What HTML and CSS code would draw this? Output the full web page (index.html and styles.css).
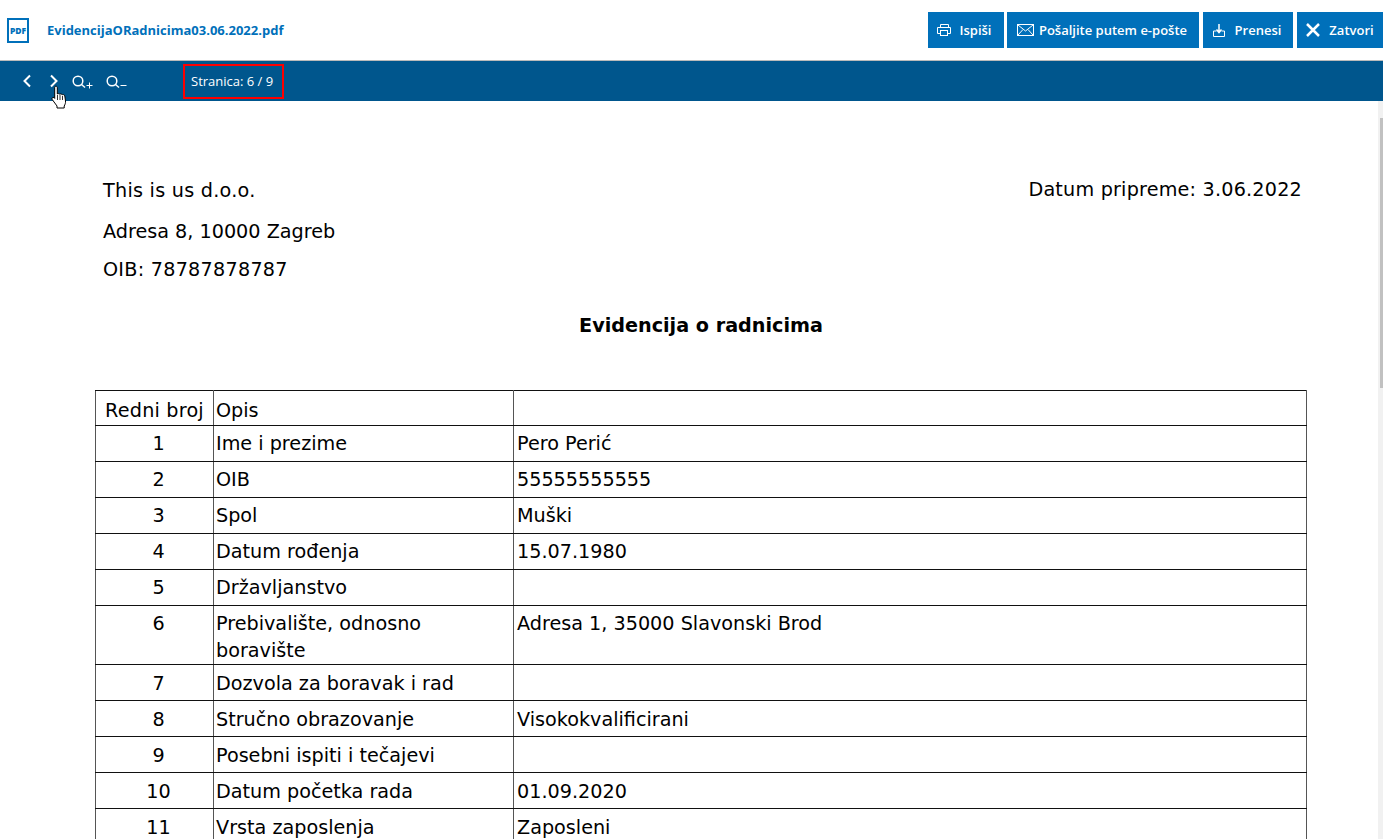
FILE: index.html
```html
<!DOCTYPE html>
<html lang="en">
<head>
    <meta charset="UTF-8">
    <title>EvidencijaORadnicima03.06.2022.pdf</title>
    <link rel="stylesheet" href="styles.css">
</head>
<body>
    <header class="topbar">
        <div class="file">
            <svg class="file-icon" width="22" height="25" viewBox="0 0 22 25">
                <rect x="1" y="1" width="20" height="23" fill="none" stroke="#0070ba" stroke-width="2"/>
                <text x="11" y="16" text-anchor="middle" class="file-icon-text">PDF</text>
            </svg>
            <span class="file-name">EvidencijaORadnicima03.06.2022.pdf</span>
        </div>
        <div class="actions">
            <button type="button" class="btn btn-print">
                <svg width="14" height="12" viewBox="0 0 14 12" fill="none" stroke="#fff"><path d="M3.5 3V.5h8V3M3.5 9.5H.5V3.5h13v6h-3"/><rect x="3.5" y="6.5" width="7" height="5"/></svg>
                Ispiši
            </button>
            <button type="button" class="btn btn-mail">
                <svg width="17" height="12" viewBox="0 0 17 12" fill="none" stroke="#fff"><rect x=".5" y=".5" width="16" height="11"/><path d="M1 1l7.500 6L16 1M1 11l5-5.500M16 11l-5-5.500"/></svg>
                Pošaljite putem e-pošte
            </button>
            <button type="button" class="btn btn-save">
                <svg width="12" height="13" viewBox="0 0 12 13" fill="none" stroke="#fff"><path d="M.5 7v5.500h11V7h-3M.5 7h3"/><path d="M6 0v8M3.500 5.500L6 8.500l2.500-3" stroke-width="1.500"/></svg>
                Prenesi
            </button>
            <button type="button" class="btn btn-close">
                <svg width="14" height="14" viewBox="0 0 14 14" fill="none" stroke="#fff" stroke-width="2.500"><path d="M1 1l12 12M13 1L1 13"/></svg>
                Zatvori
            </button>
        </div>
    </header>

    <nav class="toolbar">
        <svg class="tool tool-prev" width="10" height="14" viewBox="0 0 10 14" fill="none" stroke="#fff" stroke-width="2"><path d="M8 1.500L2.500 7 8 12.500"/></svg>
        <svg class="tool tool-next" width="10" height="14" viewBox="0 0 10 14" fill="none" stroke="#fff" stroke-width="2"><path d="M2 1.500L7.500 7 2 12.500"/></svg>
        <svg class="tool tool-in" width="21" height="14" viewBox="0 0 21 14" fill="none" stroke="#fff" stroke-width="1.500"><circle cx="6" cy="6" r="4.800"/><path d="M9.500 9.500l3.500 3"/><path d="M14.500 10.500h6M17.500 7.500v6" stroke-width="1"/></svg>
        <svg class="tool tool-out" width="21" height="14" viewBox="0 0 21 14" fill="none" stroke="#fff" stroke-width="1.500"><circle cx="6" cy="6" r="4.800"/><path d="M9.500 9.500l3.500 3"/><path d="M14.500 10.500h6" stroke-width="1"/></svg>
        <div class="page-count">Stranica: 6 / 9</div>
    </nav>

    <svg class="cursor" width="17" height="24" viewBox="0 0 17 24">
        <path d="M4 1.500c1 -.8 2.300 0 2.300 1.200V9c.8-.6 2-.5 2.500.3.800-.6 2-.4 2.500.5 1-.6 2.300 0 2.500 1.200l.7 5c.2 2-.4 3.500-1.300 5v2H6v-2L1.200 14.500c-.8-1.300.6-2.700 1.800-1.800l.7.7V2.700c0-.5 0-.9.300-1.200z" fill="#fff" stroke="#000" stroke-width="1"/>
        <path d="M6.500 10v5M9 10v5M11.500 11v4" stroke="#000" stroke-width=".8" fill="none"/>
    </svg>

    <div class="viewer">
        <main class="document">
            <div class="doc-head">
                <div class="company">
                    <p class="company-name">This is us d.o.o.</p>
                    <p class="company-address">Adresa 8, 10000 Zagreb</p>
                    <p class="company-oib">OIB: 78787878787</p>
                </div>
                <div class="doc-date">Datum pripreme: 3.06.2022</div>
            </div>
            <h1 class="doc-title">Evidencija o radnicima</h1>
            <table class="records">
                <colgroup>
                    <col class="col-num">
                    <col class="col-label">
                    <col>
                </colgroup>
                <tr class="row-head"><td class="num">Redni broj</td><td class="label">Opis</td><td></td></tr>
                <tr><td class="num">1</td><td class="label">Ime i prezime</td><td>Pero Perić</td></tr>
                <tr><td class="num">2</td><td class="label">OIB</td><td>55555555555</td></tr>
                <tr><td class="num">3</td><td class="label">Spol</td><td>Muški</td></tr>
                <tr><td class="num">4</td><td class="label">Datum rođenja</td><td>15.07.1980</td></tr>
                <tr><td class="num">5</td><td class="label">Državljanstvo</td><td></td></tr>
                <tr class="row-tall"><td class="num">6</td><td class="label">Prebivalište, odnosno boravište</td><td>Adresa 1, 35000 Slavonski Brod</td></tr>
                <tr><td class="num">7</td><td class="label">Dozvola za boravak i rad</td><td></td></tr>
                <tr><td class="num">8</td><td class="label">Stručno obrazovanje</td><td>Visokokvalificirani</td></tr>
                <tr><td class="num">9</td><td class="label">Posebni ispiti i tečajevi</td><td></td></tr>
                <tr><td class="num">10</td><td class="label">Datum početka rada</td><td>01.09.2020</td></tr>
                <tr><td class="num">11</td><td class="label">Vrsta zaposlenja</td><td>Zaposleni</td></tr>
            </table>
        </main>
        <div class="scrollbar"><div class="scroll-thumb"></div></div>
    </div>
</body>
</html>
```

FILE: styles.css
```css
html, body {
    height: 100%;
}

body {
    margin: 0;
    overflow: hidden;
    display: flex;
    flex-direction: column;
    background: #fff;
    font-family: "Open Sans", "Noto Sans", sans-serif;
}

.topbar {
    height: 60px;
    flex: none;
    display: flex;
    align-items: center;
    justify-content: space-between;
    padding: 0 0 0 7px;
    border-bottom: 1px solid #bbb;
    box-sizing: content-box;
}

.file {
    display: flex;
    align-items: center;
    gap: 18px;
}

.file-icon-text {
    font-family: "Open Sans", sans-serif;
    font-size: 8.500px;
    font-weight: 800;
    fill: #0070ba;
}

.file-name {
    color: #0070ba;
    font-size: 13px;
    font-weight: 700;
}

.actions {
    display: flex;
    gap: 3px;
}

.btn {
    height: 36px;
    display: flex;
    align-items: center;
    padding: 0;
    border: none;
    background-color: #0070ba;
    color: #fff;
    font-family: inherit;
    font-size: 13px;
    font-weight: 600;
    justify-content: center;
    cursor: pointer;
}

.btn-print { width: 76px; gap: 9px; padding-right: 4px; }
.btn-mail { width: 192px; gap: 5px; margin-right: 1px; padding-right: 2px; }
.btn-save { width: 90px; gap: 10px; margin-right: 1px; padding-right: 2px; }
.btn-close { width: 86px; gap: 9px; }

.toolbar {
    height: 40px;
    flex: none;
    display: flex;
    align-items: center;
    background: #00568d;
    color: #fff;
    padding-left: 22px;
}

.tool-next { margin-left: 17px; }
.tool-in { margin: 2px 0 0 13px; }
.tool-out { margin: 2px 0 0 13px; }

.page-count {
    height: 31px;
    width: 91px;
    margin-left: 56px;
    border: 2px solid #f00;
    display: flex;
    align-items: center;
    padding-left: 6px;
    box-sizing: content-box;
    font-size: 13px;
}

.cursor {
    position: absolute;
    left: 51px;
    top: 85px;
}

.viewer {
    flex: 1;
    min-height: 0;
    display: flex;
}

.document {
    flex: 1;
    min-width: 0;
    overflow: hidden;
    padding: 79px 71px 0 95px;
    color: #000;
    font-family: "DejaVu Sans", Verdana, sans-serif;
    font-size: 19.200px;
}

.doc-head {
    display: flex;
    justify-content: space-between;
    padding: 0 5px 0 8px;
}

.company p {
    margin: 0 0 16px;
    line-height: 22px;
}

.company .company-name {
    margin-bottom: 19px;
    letter-spacing: .25px;
}

.company .company-oib {
    letter-spacing: .25px;
}

.doc-date {
    line-height: 22px;
    margin-top: -1px;
    letter-spacing: .2px;
}

.doc-title {
    margin: 17px 0 52px;
    text-align: center;
    font-size: 19.200px;
    line-height: 24px;
    font-weight: 700;
}

.records {
    width: 1212px;
    border-collapse: collapse;
    table-layout: fixed;
}

.col-num { width: 118px; }
.col-label { width: 300px; }

.records td {
    height: 35px;
    padding: 0 3px;
    border-style: solid;
    border-width: 1px;
    border-color: #111 #555;
    line-height: 27px;
    vertical-align: middle;
}

.records .num {
    text-align: center;
    padding-left: 11px;
}

.records .label {
    padding-left: 2px;
}

.records .row-head td {
    height: 30px;
    padding-top: 4px;
}

.records .row-head .num {
    padding-left: 3px;
    letter-spacing: .2px;
}

.records .row-tall td {
    height: 54px;
    vertical-align: top;
    padding-top: 4px;
}

.records .row-tall ~ tr td {
    height: 33px;
    padding-top: 2px;
}

.scrollbar {
    width: 5px;
    flex: none;
    background: #f1f1f1;
    padding-top: 17px;
}

.scroll-thumb {
    width: 3px;
    height: 270px;
    margin-left: 2px;
    background: #c1c1c1;
}
```
